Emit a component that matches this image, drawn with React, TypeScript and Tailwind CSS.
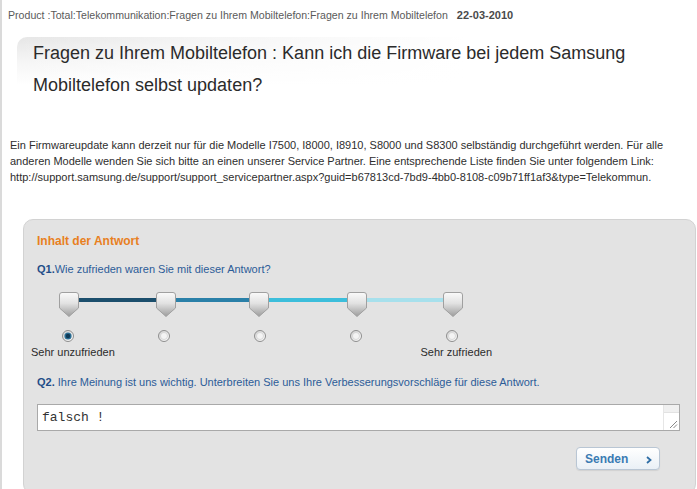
import React from "react";

const Handle = () => (
  <svg width="20" height="25" viewBox="0 0 20 25" className="block shrink-0 relative z-10">
    <defs>
      <linearGradient id="hg" x1="0" y1="0" x2="0" y2="1">
        <stop offset="0" stopColor="#fafafa" />
        <stop offset="0.45" stopColor="#e2e2e2" />
        <stop offset="1" stopColor="#9c9c9c" />
      </linearGradient>
    </defs>
    <path d="M3 0.5 H17 Q19.5 0.5 19.5 3 V16 L10 24.5 L0.5 16 V3 Q0.5 0.5 3 0.5 Z" fill="url(#hg)" stroke="#a0a0a0" strokeWidth="1" />
  </svg>
);

const Radio = ({ checked }: { checked?: boolean }) => (
  <svg width="12" height="12" viewBox="0 0 12 12" className="block shrink-0">
    <defs>
      <linearGradient id="rg" x1="0" y1="0" x2="1" y2="1">
        <stop offset="0" stopColor="#d0d0d0" />
        <stop offset="1" stopColor="#ffffff" />
      </linearGradient>
    </defs>
    <circle cx="6" cy="6" r="5.5" fill="url(#rg)" stroke="#8e8e8e" strokeWidth="1" />
    {checked ? (
      <>
        <circle cx="6" cy="6" r="3.6" fill="#2a6d93" />
        <circle cx="6" cy="6" r="2.2" fill="#0f3a56" />
      </>
    ) : (
      <circle cx="6" cy="6" r="3.5" fill="#f4f4f4" stroke="#c9c9c9" strokeWidth="0.6" />
    )}
  </svg>
);

const Seg = ({ w, color }: { w: number; color: string }) => (
  <div className="h-[4px] -mx-[2px] mt-[6px]" style={{ width: w + 4, background: color }} />
);

export default function App() {
  return (
    <div
      className="w-[697px] h-[489px] overflow-hidden bg-white border-l-2 border-[#dadada] text-[#333]"
      style={{ fontFamily: '"Liberation Sans", Arial, sans-serif' }}
    >
      {/* breadcrumb */}
      <div className="pl-[6px] pt-[9px] text-[10.6px] leading-[13px] text-[#5a5a5a] whitespace-nowrap">
        Product :Total:Telekommunikation:Fragen zu Ihrem Mobiltelefon:Fragen zu Ihrem Mobiltelefon
        <span className="ml-[9px] text-[11px] font-bold text-[#4a4a4a]">22-03-2010</span>
      </div>

      {/* title */}
      <div className="ml-[15px] mt-[15px] w-[640px] rounded-tl-[10px] pl-[16px] bg-[linear-gradient(to_right,rgba(255,255,255,0)_0%,rgba(255,255,255,0.6)_30%,#fff_70%),linear-gradient(to_bottom,#e6e6e6_0%,#f6f6f6_40%,#fff_75%)]">
        <h1 className="text-[18px] leading-[32px] text-[#2b2b2b] font-normal">
          Fragen zu Ihrem Mobiltelefon : Kann ich die Firmware bei jedem Samsung
          <br />
          Mobiltelefon selbst updaten?
        </h1>
      </div>

      {/* body text */}
      <p className="pl-[8px] mt-[36px] text-[11px] leading-[16px] text-[#2e2e2e] whitespace-nowrap">
        Ein Firmwareupdate kann derzeit nur für die Modelle I7500, I8000, I8910, S8000 und S8300 selbständig durchgeführt werden. Für alle
        <br />
        anderen Modelle wenden Sie sich bitte an einen unserer Service Partner. Eine entsprechende Liste finden Sie unter folgendem Link:
        <br />
        http://support.samsung.de/support/support_servicepartner.aspx?guid=b67813cd-7bd9-4bb0-8108-c09b71ff1af3&amp;type=Telekommun.
      </p>

      {/* feedback panel */}
      <div className="ml-[21px] mt-[34px] w-[673px] h-[275px] rounded-[10px] bg-[#e3e3e3] border border-[#d2d2d2] pl-[13px] pr-[14px] pt-[14px]">
        <div className="text-[12px] leading-[14px] font-bold text-[#e8801f]">Inhalt der Antwort</div>

        <div className="mt-[15px] text-[11px] leading-[13px] text-[#2c5c98] whitespace-nowrap">
          <span className="font-bold text-[#1f4d88]">Q1.</span>Wie zufrieden waren Sie mit dieser Antwort?
        </div>

        {/* slider */}
        <div className="mt-[16px] ml-[22px] flex items-start">
          <Handle />
          <Seg w={77} color="#1b4e6c" />
          <Handle />
          <Seg w={73} color="#2a80a8" />
          <Handle />
          <Seg w={78} color="#3cbedb" />
          <Handle />
          <Seg w={76} color="#a7e0ec" />
          <Handle />
        </div>

        {/* radios */}
        <div className="mt-[13px] ml-[25px] flex gap-[84px]">
          <Radio checked />
          <Radio />
          <Radio />
          <Radio />
          <Radio />
        </div>

        {/* labels */}
        <div className="-ml-[6px] mt-[4px] w-[461px] flex justify-between text-[11px] leading-[13px] text-[#2b2b2b]">
          <span>Sehr unzufrieden</span>
          <span>Sehr zufrieden</span>
        </div>

        <div className="mt-[17px] text-[11px] leading-[13px] text-[#2c5c98] whitespace-nowrap">
          <span className="font-bold text-[#1f4d88]">Q2.</span> Ihre Meinung ist uns wichtig. Unterbreiten Sie uns Ihre Verbesserungsvorschläge für diese Antwort.
        </div>

        {/* textarea */}
        <div className="mt-[15px] h-[27px] w-[643px] bg-white border border-[#a9a9a9] flex">
          <div
            className="flex-1 pl-[4px] pt-[5px] text-[13px] leading-[15px] text-[#333]"
            style={{ fontFamily: '"Liberation Mono", "Courier New", monospace' }}
          >
            falsch !
          </div>
          <div className="w-[16px] border-l border-[#e6e6e6] flex flex-col">
            <div className="h-[8px] bg-[#f0f0f0] border-b border-[#e2e2e2]" />
            <div className="flex-1 flex items-end justify-end">
              <svg width="9" height="9" viewBox="0 0 9 9" className="block mb-[1px] mr-[1px]">
                <line x1="1" y1="8" x2="8" y2="1" stroke="#888" strokeWidth="1" />
                <line x1="4.5" y1="8" x2="8" y2="4.5" stroke="#888" strokeWidth="1" />
              </svg>
            </div>
          </div>
        </div>

        {/* button */}
        <div className="mt-[16px] flex justify-end pr-[21px]">
          <button className="w-[84px] h-[23px] rounded-[4px] border border-[#b9c6d4] bg-[linear-gradient(to_bottom,#ffffff,#eaf0f6)] shadow-[0_1px_1px_rgba(0,0,0,0.08)] flex items-center pl-[8px] pr-[7px] justify-between">
            <span className="text-[12px] font-bold text-[#3a7bb3] leading-[14px]">Senden</span>
            <svg width="6" height="8" viewBox="0 0 6 8" className="block mt-[2px]">
              <polyline points="1,1 4.5,4 1,7" fill="none" stroke="#2f6ea6" strokeWidth="1.8" />
            </svg>
          </button>
        </div>
      </div>
    </div>
  );
}
